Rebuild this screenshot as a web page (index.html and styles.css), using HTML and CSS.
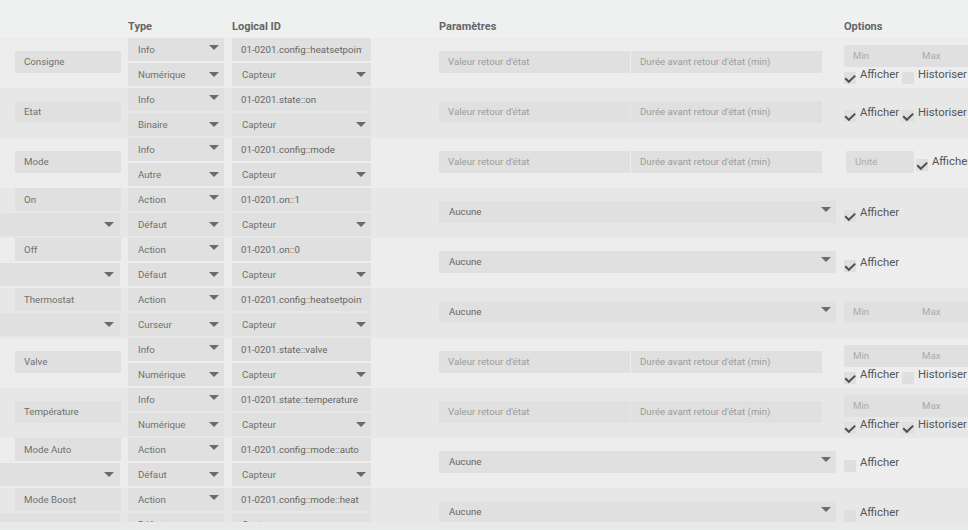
FILE: index.html
```html
<!DOCTYPE html>
<html lang="fr">
<head>
<meta charset="utf-8">
<title>Commandes</title>
<link rel="stylesheet" href="styles.css">
</head>
<body>
<div class="page">
  <div class="scroller">
    <div class="grid head">
      <div class="th"></div>
      <div class="th">Type</div>
      <div class="th">Logical ID</div>
      <div class="th">Paramètres</div>
      <div class="th">Options</div>
    </div>

    <!-- Consigne -->
    <div class="grid row odd">
      <div class="name"><div class="box nm">Consigne</div></div>
      <div class="stack"><div class="box sel b1">Info<i class="arrow"></i></div><div class="box sel">Numérique<i class="arrow"></i></div></div>
      <div class="stack"><div class="box b1 lid"><span class="clip">01-0201.config::heatsetpoint</span></div><div class="box sel">Capteur<i class="arrow"></i></div></div>
      <div class="params"><div class="pair"><div class="box ph">Valeur retour d'état</div><div class="box ph">Durée avant retour d'état (min)</div></div></div>
      <div class="opts top">
        <div class="minmax"><div class="box ph2">Min</div><div class="box ph2">Max</div></div>
        <div class="checks"><span class="cb on"><svg viewBox="0 0 12 12"><path d="M1.2 6.3 L4.8 9.8 L11.2 3.6"/></svg></span>Afficher<span class="cb gap"></span>Historiser</div>
      </div>
    </div>

    <!-- Etat -->
    <div class="grid row even">
      <div class="name"><div class="box nm">Etat</div></div>
      <div class="stack"><div class="box sel b1">Info<i class="arrow"></i></div><div class="box sel">Binaire<i class="arrow"></i></div></div>
      <div class="stack"><div class="box b1 lid">01-0201.state::on</div><div class="box sel">Capteur<i class="arrow"></i></div></div>
      <div class="params"><div class="pair"><div class="box ph">Valeur retour d'état</div><div class="box ph">Durée avant retour d'état (min)</div></div></div>
      <div class="opts mid">
        <div class="checks"><span class="cb on"><svg viewBox="0 0 12 12"><path d="M1.2 6.3 L4.8 9.8 L11.2 3.6"/></svg></span>Afficher<span class="cb gap on"><svg viewBox="0 0 12 12"><path d="M1.2 6.3 L4.8 9.8 L11.2 3.6"/></svg></span>Historiser</div>
      </div>
    </div>

    <!-- Mode -->
    <div class="grid row odd">
      <div class="name"><div class="box nm">Mode</div></div>
      <div class="stack"><div class="box sel b1">Info<i class="arrow"></i></div><div class="box sel">Autre<i class="arrow"></i></div></div>
      <div class="stack"><div class="box b1 lid">01-0201.config::mode</div><div class="box sel">Capteur<i class="arrow"></i></div></div>
      <div class="params"><div class="pair"><div class="box ph">Valeur retour d'état</div><div class="box ph">Durée avant retour d'état (min)</div></div></div>
      <div class="opts unit">
        <div class="box ph2 unite">Unité</div>
        <div class="checks inline"><span class="cb on"><svg viewBox="0 0 12 12"><path d="M1.2 6.3 L4.8 9.8 L11.2 3.6"/></svg></span>Afficher</div>
      </div>
    </div>

    <!-- On -->
    <div class="grid row even">
      <div class="name act"><div class="box nm b1">On</div><div class="box sel wide"><i class="arrow"></i></div></div>
      <div class="stack"><div class="box sel b1">Action<i class="arrow"></i></div><div class="box sel">Défaut<i class="arrow"></i></div></div>
      <div class="stack"><div class="box b1 lid">01-0201.on::1</div><div class="box sel">Capteur<i class="arrow"></i></div></div>
      <div class="params"><div class="box sel aucune">Aucune<i class="arrow"></i></div></div>
      <div class="opts mid">
        <div class="checks"><span class="cb on"><svg viewBox="0 0 12 12"><path d="M1.2 6.3 L4.8 9.8 L11.2 3.6"/></svg></span>Afficher</div>
      </div>
    </div>

    <!-- Off -->
    <div class="grid row odd">
      <div class="name act"><div class="box nm b1">Off</div><div class="box sel wide"><i class="arrow"></i></div></div>
      <div class="stack"><div class="box sel b1">Action<i class="arrow"></i></div><div class="box sel">Défaut<i class="arrow"></i></div></div>
      <div class="stack"><div class="box b1 lid">01-0201.on::0</div><div class="box sel">Capteur<i class="arrow"></i></div></div>
      <div class="params"><div class="box sel aucune">Aucune<i class="arrow"></i></div></div>
      <div class="opts mid">
        <div class="checks"><span class="cb on"><svg viewBox="0 0 12 12"><path d="M1.2 6.3 L4.8 9.8 L11.2 3.6"/></svg></span>Afficher</div>
      </div>
    </div>

    <!-- Thermostat -->
    <div class="grid row even">
      <div class="name act"><div class="box nm b1">Thermostat</div><div class="box sel wide"><i class="arrow"></i></div></div>
      <div class="stack"><div class="box sel b1">Action<i class="arrow"></i></div><div class="box sel">Curseur<i class="arrow"></i></div></div>
      <div class="stack"><div class="box b1 lid"><span class="clip">01-0201.config::heatsetpoint</span></div><div class="box sel">Capteur<i class="arrow"></i></div></div>
      <div class="params"><div class="box sel aucune">Aucune<i class="arrow"></i></div></div>
      <div class="opts center">
        <div class="minmax"><div class="box ph2">Min</div><div class="box ph2">Max</div></div>
      </div>
    </div>

    <!-- Valve -->
    <div class="grid row odd">
      <div class="name"><div class="box nm">Valve</div></div>
      <div class="stack"><div class="box sel b1">Info<i class="arrow"></i></div><div class="box sel">Numérique<i class="arrow"></i></div></div>
      <div class="stack"><div class="box b1 lid">01-0201.state::valve</div><div class="box sel">Capteur<i class="arrow"></i></div></div>
      <div class="params"><div class="pair"><div class="box ph">Valeur retour d'état</div><div class="box ph">Durée avant retour d'état (min)</div></div></div>
      <div class="opts top">
        <div class="minmax"><div class="box ph2">Min</div><div class="box ph2">Max</div></div>
        <div class="checks"><span class="cb on"><svg viewBox="0 0 12 12"><path d="M1.2 6.3 L4.8 9.8 L11.2 3.6"/></svg></span>Afficher<span class="cb gap"></span>Historiser</div>
      </div>
    </div>

    <!-- Température -->
    <div class="grid row even">
      <div class="name"><div class="box nm">Température</div></div>
      <div class="stack"><div class="box sel b1">Info<i class="arrow"></i></div><div class="box sel">Numérique<i class="arrow"></i></div></div>
      <div class="stack"><div class="box b1 lid">01-0201.state::temperature</div><div class="box sel">Capteur<i class="arrow"></i></div></div>
      <div class="params"><div class="pair"><div class="box ph">Valeur retour d'état</div><div class="box ph">Durée avant retour d'état (min)</div></div></div>
      <div class="opts top">
        <div class="minmax"><div class="box ph2">Min</div><div class="box ph2">Max</div></div>
        <div class="checks"><span class="cb on"><svg viewBox="0 0 12 12"><path d="M1.2 6.3 L4.8 9.8 L11.2 3.6"/></svg></span>Afficher<span class="cb gap on"><svg viewBox="0 0 12 12"><path d="M1.2 6.3 L4.8 9.8 L11.2 3.6"/></svg></span>Historiser</div>
      </div>
    </div>

    <!-- Mode Auto -->
    <div class="grid row odd">
      <div class="name act"><div class="box nm b1">Mode Auto</div><div class="box sel wide"><i class="arrow"></i></div></div>
      <div class="stack"><div class="box sel b1">Action<i class="arrow"></i></div><div class="box sel">Défaut<i class="arrow"></i></div></div>
      <div class="stack"><div class="box b1 lid">01-0201.config::mode::auto</div><div class="box sel">Capteur<i class="arrow"></i></div></div>
      <div class="params"><div class="box sel aucune">Aucune<i class="arrow"></i></div></div>
      <div class="opts mid">
        <div class="checks"><span class="cb"></span>Afficher</div>
      </div>
    </div>

    <!-- Mode Boost -->
    <div class="grid row even">
      <div class="name act"><div class="box nm b1">Mode Boost</div><div class="box sel wide"><i class="arrow"></i></div></div>
      <div class="stack"><div class="box sel b1">Action<i class="arrow"></i></div><div class="box sel">Défaut<i class="arrow"></i></div></div>
      <div class="stack"><div class="box b1 lid">01-0201.config::mode::heat</div><div class="box sel">Capteur<i class="arrow"></i></div></div>
      <div class="params"><div class="box sel aucune">Aucune<i class="arrow"></i></div></div>
      <div class="opts mid">
        <div class="checks"><span class="cb"></span>Afficher</div>
      </div>
    </div>
  </div>
</div>
</body>
</html>
```

FILE: styles.css
```css
* { box-sizing: border-box; }

body {
  margin: 0;
  background: #e8e9e9;
  font-family: Roboto, "Noto Sans", "Liberation Sans", sans-serif;
}

.page {
  width: 968px;
  height: 530px;
  overflow: hidden;
}

.scroller {
  height: 522px;
  overflow: hidden;
  background: #eff0f0;
}

.grid {
  display: grid;
  grid-template-columns: 128px 104px 207px 405px 400px;
}

.head { height: 38px; }

.th {
  font-size: 11px;
  font-weight: 700;
  color: #666;
  padding-top: 20px;
  line-height: 14px;
}

.row { height: 50px; }
.row.odd { background: #ecedec; }
.row.even { background: #e6e7e6; }

.box {
  background: #dfe0df;
  height: 23px;
  font-size: 9.7px;
  line-height: 23px;
  color: #6c6c6c;
  padding-left: 9px;
  white-space: nowrap;
  overflow: hidden;
  flex-shrink: 0;
}

.sel {
  display: flex;
  align-items: flex-start;
  padding-left: 10px;
  padding-right: 5px;
  color: #707070;
}

.arrow {
  display: block;
  width: 0;
  height: 0;
  margin-left: auto;
  border-left: 5px solid transparent;
  border-right: 5px solid transparent;
  border-top: 5px solid #6a6a6a;
  margin-top: 9px;
}

.b1 .arrow { margin-top: 7px; }

.stack {
  display: flex;
  flex-direction: column;
  gap: 2px;
}

.stack .box { width: 96px; }
.stack .lid, .stack .lid + .sel { width: 139px; }

.lid { padding-right: 9px; color: #666; }
.clip { display: block; overflow: hidden; }

/* name column */
.name { padding-top: 13px; }
.name .nm {
  margin-left: 15px;
  width: 106px;
  height: 22px;
  line-height: 22px;
  color: #707070;
}
.name.act {
  padding-top: 0;
  display: flex;
  flex-direction: column;
  gap: 2px;
}
.name.act .nm { height: 23px; line-height: 23px; }
.name .wide { width: 120px; padding-right: 6px; }
.name .wide .arrow { margin-top: 9px; }

/* params */
.params { padding-top: 13px; }
.pair { display: flex; gap: 1px; }
.pair .box { width: 191px; height: 22px; line-height: 22px; }
.ph { color: #9c9c9c; }
.aucune {
  width: 397px;
  height: 22px;
  line-height: 22px;
  color: #666;
}
.aucune .arrow { margin-top: 6px; }

/* options */
.opts { white-space: nowrap; }
.opts.top { padding-top: 7px; }
.opts.mid { padding-top: 18px; }
.opts.center { padding-top: 13px; }
.opts.unit {
  padding-top: 13px;
  display: flex;
  align-items: center;
  height: 35px;
}

.minmax { display: flex; }
.minmax .box {
  width: 69px;
  height: 22px;
  line-height: 22px;
}
.ph2 { color: #ababab; }

.unite {
  width: 68px;
  height: 22px;
  line-height: 22px;
  margin-left: 2px;
}

.checks {
  display: flex;
  align-items: center;
  height: 14px;
  margin-top: 1px;
  font-size: 11.3px;
  line-height: 14px;
  color: #555;
}
.opts.mid .checks { margin-top: 0; }
.checks.inline { margin-top: 0; margin-left: 2px; }

.cb {
  display: block;
  width: 12px;
  height: 12px;
  background: #dedfde;
  margin-right: 4px;
  margin-top: 5px;
  flex-shrink: 0;
}
.cb.gap { margin-left: 3px; }
.cb svg {
  display: block;
  width: 12px;
  height: 12px;
  overflow: visible;
}
.cb svg path {
  fill: none;
  stroke: #4f4f4f;
  stroke-width: 2;
}
```
